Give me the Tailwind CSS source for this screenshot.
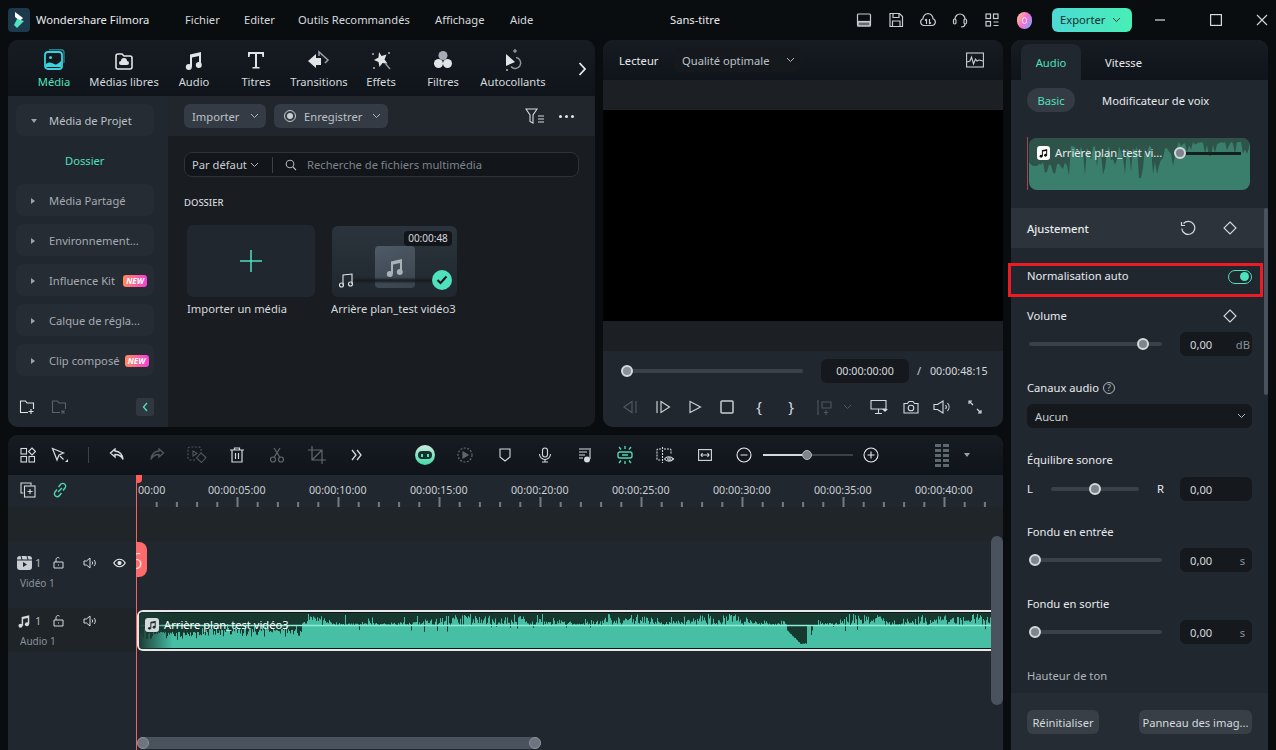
<!DOCTYPE html>
<html lang="fr"><head><meta charset="utf-8"><script src="https://cdn.jsdelivr.net/npm/@tailwindcss/browser@4"></script><title>Filmora</title></head>
<body class="m-0 bg-[#0a0d10]">
<div class="w-[1276px] h-[750px] overflow-hidden bg-[#0a0d10] flex flex-col font-['Noto_Sans','Open_Sans',sans-serif] text-[11.2px] text-[#d5dade] leading-[16px]">

<!-- top bar -->
<header class="h-[40px] shrink-0 flex items-center">
  <div class="ml-[8px] w-[22px] h-[24px] rounded-[4px] bg-[#1c3a4b] flex items-center justify-center">
    <svg width="14" height="18" viewBox="0 0 14 18"><path d="M3 1l8 6-3 3L3 6z" fill="#fff"/><path d="M5 8l7 2-7 7-3-3z" fill="#4fe3c1"/></svg>
  </div>
  <span class="ml-[6px] w-[149px] text-[#e8ebee] whitespace-nowrap">Wondershare Filmora</span>
  <span class="w-[59px] -mt-[1px]">Fichier</span><span class="w-[54px] -mt-[1px]">Editer</span><span class="w-[137px] -mt-[1px] whitespace-nowrap">Outils Recommandés</span><span class="w-[75px] -mt-[1px]">Affichage</span><span class="w-[160px] -mt-[1px]">Aide</span>
  <span class="w-[178px] text-[#e8ebee]">Sans-titre</span>
  <div class="w-[32px] flex justify-center"><svg width="16" height="16" fill="none" stroke="#c6ccd2" stroke-width="1.2"><rect x="1.500" y="2" width="13" height="12" rx="1"/><path d="M1.500 9.500h13"/><path d="M2 10h12v4H2z" fill="#c6ccd2" fill-opacity=".5"/></svg></div>
  <div class="w-[32px] flex justify-center"><svg width="16" height="16" fill="none" stroke="#c6ccd2" stroke-width="1.2"><path d="M2 1.500h9.500l3 3V14.500H2z"/><path d="M5 1.500v4h6v-4M4.500 14.500V9h7.500v5.500"/></svg></div>
  <div class="w-[32px] flex justify-center"><svg width="18" height="18" fill="none" stroke="#c6ccd2" stroke-width="1.2"><path d="M5 14.500a3.500 3.500 0 0 1-1-6.800 5 5 0 0 1 10 0 3.500 3.500 0 0 1-1 6.800z"/><path d="M7.500 13V8M6 9.500l1.500-1.500M10.500 8v5M12 11.500L10.500 13"/></svg></div>
  <div class="w-[32px] flex justify-center"><svg width="18" height="18" fill="none" stroke="#c6ccd2" stroke-width="1.2"><path d="M4 8a5 5 0 0 1 10 0"/><rect x="2.500" y="8" width="2.500" height="5" rx="1.200"/><rect x="13" y="8" width="2.500" height="5" rx="1.200"/><path d="M14 13c0 2.500-2 3-4 3"/></svg></div>
  <div class="w-[32px] flex justify-center"><svg width="16" height="16" fill="none" stroke="#c6ccd2" stroke-width="1.200"><rect x="2" y="2" width="4.500" height="4.500"/><rect x="9.500" y="2" width="4.500" height="4.500"/><rect x="2" y="9.500" width="4.500" height="4.500"/><path d="M9.500 10h5M9.500 13.500h5"/></svg></div>
  <div class="w-[32px] flex justify-center"><div class="w-[15px] h-[17px] rounded-full bg-[linear-gradient(120deg,#ffd27a,#f56fd2_50%,#6fa8ff)] flex items-center justify-center"><div class="w-[5px] h-[7px] rounded-full border border-white/70"></div></div></div>
  <div class="ml-[12px] w-[80px] h-[24px] rounded-[6px] bg-[linear-gradient(90deg,#4dd9d5,#47efb7)] flex items-center pl-[8px] text-[#14312c]">Exporter<svg class="ml-[7px]" width="9" height="6" fill="none" stroke="#14312c" stroke-width="1"><path d="M1 1l3.500 3.500L8 1"/></svg></div>
  <div class="ml-[14px] w-[28px] flex justify-center"><svg width="12" height="12" stroke="#d5dade" stroke-width="1.200"><path d="M1 6h10"/></svg></div>
  <div class="ml-[28px] w-[28px] flex justify-center"><svg width="12" height="12" fill="none" stroke="#d5dade" stroke-width="1.200"><rect x=".6" y=".6" width="10.800" height="10.800"/></svg></div>
  <div class="ml-[18px] w-[28px] flex justify-center"><svg width="12" height="12" stroke="#d5dade" stroke-width="1.100"><path d="M1 1l10 10M11 1L1 11"/></svg></div>
</header>

<main class="flex-1 min-h-0 flex gap-[8px] px-[8px]">
  <div class="w-[995px] flex flex-col gap-[8px]">
    <div class="h-[387px] flex gap-[8px]">

      <!-- media panel -->
      <section class="w-[587px] rounded-[10px] overflow-hidden flex flex-col bg-[#191c20]">
        <div class="h-[56px] shrink-0 bg-[linear-gradient(180deg,#171c22,#0f141a)] flex pl-[16px] pt-[8px]">
          <div class="w-[60px] flex flex-col items-center text-[#4fe0bd]">
            <svg width="22" height="24" viewBox="0 0 22 24" fill="none"><rect x="2" y="4" width="17" height="17" rx="3" stroke="#38d3df" stroke-width="1.800"/><path d="M6 1.800h12a3 3 0 0 1 3 3v10" stroke="#2e7f8a" stroke-width="1.400"/><circle cx="7.500" cy="9.500" r="1.500" fill="#38d3df"/><path d="M3 16c4-3 6-1 8 0s4 0 7-3v6H3z" fill="#38d3df"/></svg>
            <span class="mt-[2px]">Média</span></div>
          <div class="w-[80px] flex flex-col items-center">
            <svg width="22" height="24" viewBox="0 0 22 24" fill="none"><path d="M3 8a2 2 0 0 1 2-2h4l2 2h6a2 2 0 0 1 2 2v9a2 2 0 0 1-2 2H5a2 2 0 0 1-2-2z" stroke="#e1e5e8" stroke-width="1.600"/><path d="M8 17a2 2 0 0 1 0-4 3 3 0 0 1 6 0 2 2 0 0 1 0 4z" fill="#e1e5e8"/></svg>
            <span class="mt-[2px] whitespace-nowrap">Médias libres</span></div>
          <div class="w-[60px] flex flex-col items-center">
            <svg width="22" height="24" viewBox="0 0 22 24" fill="#e1e5e8"><path d="M7 6.500l11-2.500v13h-2V8L9 9.500V19H7z"/><circle cx="5.800" cy="19" r="3"/><circle cx="15.800" cy="17" r="3"/></svg>
            <span class="mt-[2px]">Audio</span></div>
          <div class="w-[64px] flex flex-col items-center">
            <svg width="22" height="24" viewBox="0 0 22 24" fill="#e1e5e8"><path d="M3 4h16v5h-1.600l-.4-3h-5v13h2.500v1.500h-7V19H10V6H5l-.4 3H3z"/></svg>
            <span class="mt-[2px]">Titres</span></div>
          <div class="w-[62px] flex flex-col items-center">
            <svg width="24" height="24" viewBox="0 0 24 24"><path d="M12 8V4l9 8-3 3" fill="none" stroke="#9aa2aa" stroke-width="1.500"/><path d="M1 13l8-7v4h5v7H9v3z" fill="#e1e5e8"/></svg>
            <span class="mt-[2px]">Transitions</span></div>
          <div class="w-[62px] flex flex-col items-center">
            <svg width="24" height="24" viewBox="0 0 24 24"><path d="M10 4l2.500 4 5-1.500-2 5 3 4-5-.5-3 4-1-5-4.500-2 4.500-2.500z" fill="#e1e5e8"/><path d="M16 15l5 6" stroke="#8d959c" stroke-width="1.500"/><circle cx="4" cy="6" r="1" fill="#aeb5bb"/><circle cx="20" cy="5" r="1" fill="#aeb5bb"/><circle cx="5" cy="20" r="1" fill="#aeb5bb"/></svg>
            <span class="mt-[2px]">Effets</span></div>
          <div class="w-[62px] flex flex-col items-center">
            <svg width="24" height="24" viewBox="0 0 24 24" fill="#e1e5e8"><circle cx="12" cy="7.500" r="4.500" fill="#a5acb3"/><circle cx="7.500" cy="15.500" r="4.500"/><circle cx="16.500" cy="15.500" r="4.500"/></svg>
            <span class="mt-[2px]">Filtres</span></div>
          <div class="w-[78px] flex flex-col items-center">
            <svg width="26" height="24" viewBox="0 0 26 24"><path d="M6 6l9 8-9 4z" fill="#e1e5e8"/><path d="M16 9.500a5.500 5.500 0 1 1-5 9" fill="none" stroke="#8d959c" stroke-width="1.500"/><path d="M15 1v4M13 3h4" stroke="#aeb5bb"/><circle cx="7" cy="22" r="1" fill="#aeb5bb"/></svg>
            <span class="mt-[2px] whitespace-nowrap">Autocollants</span></div>
          <svg class="ml-[26px] mt-[14px]" width="9" height="14" fill="none" stroke="#e8ebee" stroke-width="1.800"><path d="M1.500 1l5.500 6-5.500 6"/></svg>
        </div>
        <div class="flex-1 min-h-0 flex">
          <aside class="w-[160px] bg-[#20272e] pl-[8px] pr-[14px] pt-[8px] flex flex-col text-[#a4abb2]">
            <div class="h-[32px] rounded-[8px] bg-[#262c33] flex items-center pl-[15px] pt-[1px]"><span class="w-0 h-0 border-x-[3px] border-x-transparent border-t-[4px] border-t-[#9aa1a8]"></span><span class="ml-[12px] text-[#bcc2c8]">Média de Projet</span></div>
            <div class="h-[48px] flex items-center pl-[49px] pt-[1px] text-[#4fe0bd]">Dossier</div>
            <div class="flex flex-col gap-[8px]">
              <div class="h-[32px] rounded-[8px] bg-[#262c33] flex items-center pl-[15px] pt-[1px] whitespace-nowrap"><span class="w-0 h-0 border-y-[3px] border-y-transparent border-l-[4px] border-l-[#9aa1a8]"></span><span class="ml-[14px]">Média Partagé</span></div>
              <div class="h-[32px] rounded-[8px] bg-[#262c33] flex items-center pl-[15px] pt-[1px] whitespace-nowrap"><span class="w-0 h-0 border-y-[3px] border-y-transparent border-l-[4px] border-l-[#9aa1a8]"></span><span class="ml-[14px]">Environnement...</span></div>
              <div class="h-[32px] rounded-[8px] bg-[#262c33] flex items-center pl-[15px] pt-[1px] whitespace-nowrap"><span class="w-0 h-0 border-y-[3px] border-y-transparent border-l-[4px] border-l-[#9aa1a8]"></span><span class="ml-[14px]">Influence Kit</span><span class="ml-[8px] w-[24px] h-[12px] rounded-[3px] bg-[linear-gradient(90deg,#ff8a5c,#f53fd8)] text-white text-[8px] leading-[12px] font-bold italic text-center">NEW</span></div>
              <div class="h-[32px] rounded-[8px] bg-[#262c33] flex items-center pl-[15px] pt-[1px] whitespace-nowrap"><span class="w-0 h-0 border-y-[3px] border-y-transparent border-l-[4px] border-l-[#9aa1a8]"></span><span class="ml-[14px]">Calque de régla...</span></div>
              <div class="h-[32px] rounded-[8px] bg-[#262c33] flex items-center pl-[15px] pt-[1px] whitespace-nowrap"><span class="w-0 h-0 border-y-[3px] border-y-transparent border-l-[4px] border-l-[#9aa1a8]"></span><span class="ml-[14px]">Clip composé</span><span class="ml-[5px] w-[24px] h-[12px] rounded-[3px] bg-[linear-gradient(90deg,#ff8a5c,#f53fd8)] text-white text-[8px] leading-[12px] font-bold italic text-center">NEW</span></div>
            </div>
            <div class="mt-[22px] flex items-center">
              <svg class="ml-[3px]" width="16" height="16" fill="none" stroke="#e1e5e8" stroke-width="1.100"><path d="M9 13.500H1.500V2h5l1.500 2h6.500v6M12 10v5M9.500 12.500h5"/></svg>
              <svg class="ml-[16px]" width="16" height="16" fill="none" stroke="#5a626a" stroke-width="1.100"><path d="M9 13.500H1.500V2h5l1.500 2h6.500v6M10.500 11.500l3 3M13.500 11.500l-3 3"/></svg>
              <div class="ml-[70px] w-[18px] h-[18px] shrink-0 rounded-[3px] bg-[#2f3840] flex items-center justify-center"><svg width="6" height="10" fill="none" stroke="#4fe0bd" stroke-width="1.300"><path d="M5 1L1.500 5 5 9"/></svg></div>
            </div>
          </aside>
          <div class="flex-1 min-w-0 flex flex-col">
            <div class="h-[40px] shrink-0 bg-[#20262c] flex items-center pl-[16px]">
              <div class="w-[82px] h-[24px] rounded-[6px] bg-[#343b44] flex items-center justify-between pl-[8px] pr-[7px] text-[#bcc2c8]"><span class="pt-[1px]">Importer</span><svg width="9" height="6" fill="none" stroke="#aeb5bb"><path d="M1 1l3.500 3.500L8 1"/></svg></div>
              <div class="ml-[8px] w-[114px] h-[24px] rounded-[6px] bg-[#343b44] flex items-center pl-[10px] pr-[7px] text-[#bcc2c8]"><span class="w-[12px] h-[12px] rounded-full border border-[#c8ced3] flex items-center justify-center"><span class="w-[6px] h-[6px] rounded-full bg-[#c8ced3]"></span></span><span class="ml-[8px] flex-1 pt-[1px]">Enregistrer</span><svg width="9" height="6" fill="none" stroke="#aeb5bb"><path d="M1 1l3.500 3.500L8 1"/></svg></div>
              <svg class="ml-[137px]" width="20" height="18" fill="none" stroke="#d5dade" stroke-width="1.100"><path d="M1 2h11L8 8v8l-3-1.500V8zM13 9h6M13 12h6M13 15h6"/></svg>
              <div class="ml-[14px] flex gap-[3px]"><span class="w-[3px] h-[3px] rounded-full bg-[#e1e5e8]"></span><span class="w-[3px] h-[3px] rounded-full bg-[#e1e5e8]"></span><span class="w-[3px] h-[3px] rounded-full bg-[#e1e5e8]"></span></div>
            </div>
            <div class="ml-[16px] mt-[16px] w-[395px] h-[25px] rounded-[8px] bg-[#12151a] border border-[#2c333a] flex items-center pl-[7px] pt-[1px]">
              <span class="w-[58px] text-[#c8ced3] whitespace-nowrap">Par défaut</span><svg width="9" height="6" fill="none" stroke="#aeb5bb"><path d="M1 1l3.500 3.500L8 1"/></svg>
              <span class="ml-[13px] w-px h-[16px] bg-[#3a4149]"></span>
              <svg class="ml-[12px]" width="12" height="12" fill="none" stroke="#aeb5bb" stroke-width="1.100"><circle cx="5" cy="5" r="3.800"/><path d="M8 8l3 3"/></svg>
              <span class="ml-[10px] text-[#7c848c]">Recherche de fichiers multimédia</span>
            </div>
            <div class="ml-[16px] mt-[18px] text-[9.5px] font-medium text-[#d5dade]">DOSSIER</div>
            <div class="mt-[14px] flex">
              <div class="ml-[19px] w-[128px]">
                <div class="h-[72px] rounded-[6px] bg-[#20272e] flex items-center justify-center"><svg width="24" height="24" stroke="#4fe0bd" stroke-width="1.500"><path d="M12 1v22M1 12h22"/></svg></div>
                <div class="mt-[4px] whitespace-nowrap">Importer un média</div>
              </div>
              <div class="ml-[17px] w-[125px]">
                <div class="relative mt-px h-[71px] rounded-[6px] bg-[linear-gradient(180deg,#2b343c,#20272e)] overflow-hidden flex justify-center pt-[20px]">
                  <div class="w-[40px] h-[42px] rounded-[4px] bg-[linear-gradient(160deg,#4e5a66,#39434d)] flex items-center justify-center"><svg width="24" height="24" viewBox="0 0 22 24" fill="#a9b1b9"><path d="M7 6.500l11-2.500v13h-2V8L9 9.500V19H7z"/><circle cx="5.800" cy="19" r="3"/><circle cx="15.800" cy="17" r="3"/></svg></div>
                  <div class="absolute left-[22px] right-[18px] top-[53px] h-[3px] bg-[#15191d] blur-[1px]"></div>
                  <div class="absolute right-[5px] top-[5px] w-[48px] h-[15px] rounded-[4px] bg-[#12151a] text-center text-[10px] leading-[15px] text-[#d5dade]">00:00:48</div>
                  <svg class="absolute left-[6px] top-[46px]" width="16" height="16" fill="none" stroke="#e1e5e8" stroke-width="1.100"><path d="M5 13V3l9-1v10"/><circle cx="3.500" cy="13" r="2"/><circle cx="12.500" cy="12" r="2"/></svg>
                  <div class="absolute right-[5px] top-[44px] w-[20px] h-[20px] rounded-full bg-[#4fe0bd] flex items-center justify-center"><svg width="12" height="10" fill="none" stroke="#0f1418" stroke-width="2"><path d="M1.500 5l3 3 6-6.500"/></svg></div>
                </div>
                <div class="mt-[4px] -ml-px whitespace-nowrap">Arrière plan_test vidéo3</div>
              </div>
            </div>
          </div>
        </div>
      </section>

      <!-- player -->
      <section class="w-[400px] rounded-[10px] overflow-hidden flex flex-col bg-[#1c1f23]">
        <div class="h-[40px] shrink-0 bg-[linear-gradient(180deg,#171c22,#0f141a)] flex items-center pl-[16px]">
          <span class="w-[55px] text-[#e8ebee] pt-[1px]">Lecteur</span>
          <div class="w-[127px] h-[24px] rounded-[6px] bg-[#15191e] flex items-center justify-between pl-[8px] pr-[6px] text-[#bcc2c8]"><span class="whitespace-nowrap pt-[1px]">Qualité optimale</span><svg width="9" height="6" fill="none" stroke="#aeb5bb"><path d="M1 1l3.500 3.500L8 1"/></svg></div>
          <svg class="ml-[165px]" width="18" height="16" fill="none" stroke="#c8ced3" stroke-width="1.100"><rect x=".6" y="1" width="16.800" height="14"/><path d="M1 10l3-1 1.500-4 2 7 2-5 1.500 2 2-1 4 1"/></svg>
        </div>
        <div class="h-[30px] shrink-0"></div>
        <div class="h-[211px] shrink-0 bg-black"></div>
        <div class="h-[30px] shrink-0"></div>
        <div class="flex-1 bg-[#21272e] pt-[8px]">
          <div class="h-[24px] flex items-center pl-[18px]">
            <div class="relative w-[182px] h-[4px] rounded bg-[#3a4149]"><span class="absolute -left-[0px] -top-[4px] w-[12px] h-[12px] rounded-full bg-[#8a919a] border-2 border-[#d5d8dc]"></span></div>
            <div class="ml-[18px] w-[88px] h-[24px] rounded-[6px] bg-[#15191e] text-center text-[10.7px] leading-[25px] text-[#d5dade]">00:00:00:00</div>
            <span class="ml-[8px] w-[13px] text-[#c8ced3]">/</span>
            <span class="text-[10.7px] text-[#d5dade]">00:00:48:15</span>
          </div>
          <div class="mt-[12px] h-[24px] flex items-center pl-[11px]">
            <div class="w-[32px] flex justify-center"><svg width="16" height="14" fill="none" stroke="#4f575e" stroke-width="1.200"><path d="M10 1.500L2 7l8 5.500zM14 1v12"/></svg></div>
            <div class="ml-px w-[32px] flex justify-center"><svg width="16" height="14" fill="none" stroke="#c8ced3" stroke-width="1.200"><path d="M2 1v12M6 1.500L14.500 7 6 12.500z"/></svg></div>
            <div class="w-[32px] flex justify-center"><svg width="14" height="14" fill="none" stroke="#c8ced3" stroke-width="1.200"><path d="M2 1.500L12.500 7 2 12.500z"/></svg></div>
            <div class="w-[32px] flex justify-center"><svg width="14" height="14" fill="none" stroke="#c8ced3" stroke-width="1.500"><rect x="1" y="1" width="12" height="12" rx="1"/></svg></div>
            <div class="w-[32px] text-center text-[15px] -mt-[3px] text-[#d5dade]">{</div>
            <div class="w-[32px] text-center text-[15px] -mt-[3px] text-[#d5dade]">}</div>
            <div class="ml-[2px] w-[32px] flex justify-center"><svg width="16" height="15" fill="none" stroke="#4f575e" stroke-width="1.100"><path d="M1 1v13M0 1h2M0 14h2M5 2h9v6H5zM9 10v5M7 12.500h4"/></svg></div>
            <div class="w-[12px] flex justify-center"><svg width="9" height="6" fill="none" stroke="#4f575e"><path d="M1 1l3.500 3.500L8 1"/></svg></div>
            <div class="ml-[10px] w-[32px] flex justify-center"><svg width="18" height="16" fill="none" stroke="#d5dade" stroke-width="1.100"><path d="M1 1.500h15V10H1zM8.500 10v4M5 14.500h7"/><path d="M12 10h6l-3 3z" fill="#d5dade" stroke="none"/></svg></div>
            <div class="w-[32px] flex justify-center"><svg width="16" height="14" fill="none" stroke="#d5dade" stroke-width="1.100"><path d="M1 3.500h3.500L6 1.500h4l1.500 2H15v9.500H1z"/><circle cx="8" cy="8" r="2.800"/></svg></div>
            <div class="-ml-px w-[32px] flex justify-center"><svg width="18" height="14" fill="none" stroke="#d5dade" stroke-width="1.100"><path d="M1 4.500h3.500L10 1v12L4.500 9.500H1zM12.500 5a3 3 0 0 1 0 4M14.500 3a6 6 0 0 1 0 8"/></svg></div>
            <div class="ml-px w-[32px] flex justify-center"><svg width="14" height="14" fill="none" stroke="#d5dade" stroke-width="1.100"><path d="M1 1l4 4M1 4V1h3M13 13L9 9M13 10v3h-3"/></svg></div>
          </div>
        </div>
      </section>
    </div>

    <!-- timeline -->
    <section class="h-[315px] rounded-t-[10px] overflow-hidden flex flex-col bg-[#21272e] relative">
      <div class="h-[40px] shrink-0 bg-[linear-gradient(180deg,#171c22,#0f141a)] flex items-center pl-[4px]">
        <div class="w-[32px] flex justify-center"><svg width="16" height="16" fill="none" stroke="#d5dade" stroke-width="1.100"><rect x="1" y="1.500" width="5.500" height="5.500"/><path d="M12 1l3.500 3.500L12 8 8.500 4.500z"/><rect x="1" y="9.500" width="5.500" height="5.500"/><rect x="9" y="9.500" width="5.500" height="5.500"/></svg></div>
        <div class="w-[32px] flex justify-center"><svg width="18" height="16" fill="none" stroke="#d5dade" stroke-width="1.200"><path d="M1.500 1.500l11 4.500-4.500 2-2 5z"/><path d="M9 9l3.500 3.500"/><path d="M17 12v3h-3z" fill="#d5dade" stroke="none"/></svg></div>
        <div class="w-[24px] flex justify-center"><span class="w-px h-[16px] bg-[#3a4149]"></span></div>
        <div class="-ml-[3px] w-[40px] flex justify-center"><svg width="16" height="14" fill="none" stroke="#d5dade" stroke-width="1.400"><path d="M6 1L1.500 5 6 9V6.500c4 0 6.500 1.500 8 5-.5-5-3-8-8-8.500z"/></svg></div>
        <div class="w-[40px] flex justify-center"><svg width="16" height="14" fill="none" stroke="#4f575e" stroke-width="1.400"><path d="M10 1l4.500 4L10 9V6.500c-4 0-6.500 1.500-8 5 .5-5 3-8 8-8.500z"/></svg></div>
        <div class="w-[40px] flex justify-center"><svg width="20" height="18" fill="none" stroke="#4f575e" stroke-width="1.100"><path d="M8 14H3a2 2 0 0 1-2-2V3a2 2 0 0 1 2-2h9a2 2 0 0 1 2 2v4" stroke-dasharray="2 1.500"/><path d="M6 5l4 2.500L6 10z"/><path d="M14 7l5 4.500-4.500 5-5-4.500z"/></svg></div>
        <div class="w-[40px] flex justify-center"><svg width="14" height="16" fill="none" stroke="#d5dade" stroke-width="1.200"><path d="M0 3h14M4.500 3V1h5v2M2 3v12h10V3M5.500 6v6M8.500 6v6"/></svg></div>
        <div class="w-[40px] flex justify-center"><svg width="16" height="16" fill="none" stroke="#5f676f" stroke-width="1.200"><circle cx="4" cy="12.500" r="2.500"/><circle cx="12" cy="12.500" r="2.500"/><path d="M5 10.500L11 1M11 10.500L5 1"/></svg></div>
        <div class="w-[40px] flex justify-center"><svg width="18" height="18" fill="none" stroke="#5f676f" stroke-width="1.200"><path d="M4 0v14h14M0 4h14v14M4 14L14 4"/></svg></div>
        <div class="w-[40px] flex justify-center"><svg width="12" height="12" fill="none" stroke="#d5dade" stroke-width="1.300"><path d="M1 1l4 5-4 5M6 1l4 5-4 5"/></svg></div>
        <div class="ml-[28px] w-[40px] flex justify-center"><div class="w-[20px] h-[20px] rounded-full bg-[linear-gradient(180deg,#cfe9e1,#3fdba8)] flex items-center justify-center"><div class="w-[14px] h-[8px] rounded-[4px] bg-[#16322c] flex items-center justify-center gap-[4px]"><span class="w-[2px] h-[3px] bg-[#4fe0bd]"></span><span class="w-[2px] h-[3px] bg-[#4fe0bd]"></span></div></div></div>
        <div class="w-[40px] flex justify-center"><svg width="16" height="16" fill="none" stroke="#5f676f" stroke-width="1.200"><circle cx="8" cy="8" r="7" stroke-dasharray="2 1.500"/><path d="M6 5l5 3-5 3z" fill="#5f676f"/></svg></div>
        <div class="w-[40px] flex justify-center"><svg width="12" height="14" fill="none" stroke="#d5dade" stroke-width="1.100"><path d="M1 1h10v8l-5 4-5-4z"/></svg></div>
        <div class="w-[40px] flex justify-center"><svg width="14" height="16" fill="none" stroke="#d5dade" stroke-width="1.100"><rect x="4.500" y="1" width="5" height="9" rx="2.500"/><path d="M1.500 7a5.500 5.500 0 0 0 11 0M7 12.500V15M4 15h6"/></svg></div>
        <div class="w-[40px] flex justify-center"><svg width="14" height="16" fill="none" stroke="#d5dade" stroke-width="1.100"><path d="M1 2h10M1 5h8M1 8h6M1 11h4M12 1v11"/><circle cx="9" cy="12.500" r="3" fill="#d5dade" stroke="none"/></svg></div>
        <div class="w-[40px] flex justify-center"><svg width="18" height="18" fill="none" stroke="#4fd5b0" stroke-width="1.400"><rect x="2" y="6" width="14" height="6" rx="2"/><path d="M6 9h6M9 0v3M9 15v3M3 1l2 2.500M15 1l-2 2.500M3 17l2-2.500M15 17l-2-2.500"/></svg></div>
        <div class="w-[40px] flex justify-center"><svg width="19" height="17" fill="none" stroke="#d5dade" stroke-width="1.100"><path d="M5 2H2a1 1 0 0 0-1 1v9a1 1 0 0 0 1 1h3M8 2h6a1 1 0 0 1 1 1v4M6.500 0v16" stroke-dasharray="2 1"/><path d="M8.500 12c2.500-3 6-3 9 0-3 3-6.500 3-9 0z"/><circle cx="13" cy="12" r="1.300"/></svg></div>
        <div class="w-[40px] flex justify-center"><svg width="14" height="12" fill="none" stroke="#d5dade" stroke-width="1.100"><rect x=".6" y=".6" width="12.800" height="10.800"/><path d="M3 6h8M4.500 4L3 6l1.500 2M9.500 4L11 6 9.500 8"/></svg></div>
        <div class="w-[38px] flex justify-center"><svg width="16" height="16" fill="none" stroke="#e8ebee" stroke-width="1.100"><circle cx="8" cy="8" r="7"/><path d="M4.500 8h7"/></svg></div>
        <div class="relative w-[90px] h-[2px] bg-[#3a4149]"><span class="absolute left-0 top-0 w-[44px] h-[2px] bg-[#d5d8dc]"></span><span class="absolute left-[39px] -top-[4px] w-[10px] h-[10px] rounded-full bg-[#7e858d] border border-[#aeb5bb]"></span></div>
        <div class="w-[36px] flex justify-center"><svg width="16" height="16" fill="none" stroke="#e8ebee" stroke-width="1.100"><circle cx="8" cy="8" r="7"/><path d="M4.500 8h7M8 4.500v7"/></svg></div>
        <div class="ml-[33px] w-[40px] flex justify-center"><div class="grid grid-cols-2 gap-x-[2px] gap-y-[2px]"><span class="w-[6px] h-[3px] bg-[#5f676f]"></span><span class="w-[6px] h-[3px] bg-[#5f676f]"></span><span class="w-[6px] h-[3px] bg-[#5f676f]"></span><span class="w-[6px] h-[3px] bg-[#5f676f]"></span><span class="w-[6px] h-[3px] bg-[#5f676f]"></span><span class="w-[6px] h-[3px] bg-[#5f676f]"></span><span class="w-[6px] h-[3px] bg-[#5f676f]"></span><span class="w-[6px] h-[3px] bg-[#5f676f]"></span><span class="w-[6px] h-[3px] bg-[#5f676f]"></span><span class="w-[6px] h-[3px] bg-[#5f676f]"></span></div></div>
        <span class="ml-[2px] w-0 h-0 border-x-[3px] border-x-transparent border-t-[4px] border-t-[#9aa1a8]"></span>
      </div>

      <div class="h-[32px] shrink-0 flex">
        <div class="w-[128px] shrink-0 flex items-center pl-[12px] gap-[16px] pb-[2px]">
          <svg width="16" height="16" fill="none" stroke="#d5dade" stroke-width="1.100"><path d="M3.500 11H1V1h10v2.500"/><rect x="4.500" y="4" width="10.500" height="11"/><path d="M10 7v5M7.500 9.500h5"/></svg>
          <svg width="16" height="16" fill="none" stroke="#4fd5b0" stroke-width="1.400"><path d="M6.500 5l2-2.500a2.800 2.800 0 0 1 4.500 3.500l-2 2.500M9.500 11l-2 2.500a2.800 2.800 0 0 1-4.500-3.500l2-2.500M6 10l4-4"/></svg>
        </div>
        <div class="relative flex-1 min-w-0 overflow-hidden">
          <div class="flex gap-[44px] pt-[7px] text-[#c8ced3] whitespace-nowrap text-[10.7px]">
            <span class="w-[26px] ml-[2px]">00:00</span><span class="w-[57px] text-center">00:00:05:00</span><span class="w-[57px] text-center">00:00:10:00</span><span class="w-[57px] text-center">00:00:15:00</span><span class="w-[57px] text-center">00:00:20:00</span><span class="w-[57px] text-center">00:00:25:00</span><span class="w-[57px] text-center">00:00:30:00</span><span class="w-[57px] text-center">00:00:35:00</span><span class="w-[57px] text-center">00:00:40:00</span>
          </div>
          <svg class="absolute left-0 top-0" width="867" height="32"><defs><pattern id="t" x="-0.500" y="0" width="101" height="32" patternUnits="userSpaceOnUse"><path d="M1 22v10M21.200 27v5M41.400 27v5M61.600 27v5M81.800 27v5" stroke="#c8ced3" stroke-width="1"/></pattern></defs><rect x="10" width="867" height="32" fill="url(#t)"/></svg>
        </div>
      </div>

      <div class="flex-1 min-h-0 relative">
        <div class="h-[34px] bg-[#1f2529]"></div>
        <div class="h-[67px] flex">
          <div class="w-[128px] pl-[9px] pt-[12px]">
            <div class="flex items-center h-[20px]">
              <svg width="15" height="14" viewBox="0 0 15 14"><rect width="15" height="14" rx="3" fill="#c8ced3"/><path d="M6 6l4 2.500L6 11z" fill="#21272e"/><path d="M0 4h15M4 0l1 4M10 0l1 4" stroke="#21272e"/></svg>
              <span class="ml-[3px] text-[11px] text-[#aeb5bb]">1</span>
              <svg class="ml-[12px]" width="11" height="12" fill="none" stroke="#d5dade"><path d="M1 5h9v6H1zM3 5V2.500a2 2 0 0 1 3.500-1.300"/><path d="M5 8h1"/></svg>
              <svg class="ml-[19px]" width="13" height="12" fill="none" stroke="#d5dade"><path d="M1 4h2.500L7 1v10L3.500 8H1zM9 4.500a2 2 0 0 1 0 3M11 3a4 4 0 0 1 0 6"/></svg>
              <svg class="ml-[17px]" width="13" height="10" fill="none" stroke="#e8ebee" stroke-width="1.200"><path d="M.8 5c3-5 8.400-5 11.400 0-3 5-8.400 5-11.400 0z"/><circle cx="6.500" cy="5" r="1.500" fill="#e8ebee"/></svg>
            </div>
            <div class="mt-[2px] pl-[3px] text-[10px] text-[#8a929a]">Vidéo 1</div>
          </div>
        </div>
        <div class="flex">
          <div class="w-[128px] h-[44px] bg-[#1f2428] pl-[9px] pt-[3px]">
            <div class="flex items-center h-[20px]">
              <svg width="14" height="14" viewBox="0 0 22 24" fill="#d5dade"><path d="M7 5l13-3v15h-2.500V7L9.500 8.500V20H7z"/><circle cx="5" cy="20" r="3.500"/><circle cx="16" cy="17.500" r="3.500"/></svg>
              <span class="ml-[4px] text-[11px] text-[#aeb5bb]">1</span>
              <svg class="ml-[12px]" width="11" height="12" fill="none" stroke="#d5dade"><path d="M1 5h9v6H1zM3 5V2.500a2 2 0 0 1 3.500-1.300"/><path d="M5 8h1"/></svg>
              <svg class="ml-[19px]" width="13" height="12" fill="none" stroke="#d5dade"><path d="M1 4h2.500L7 1v10L3.500 8H1zM9 4.500a2 2 0 0 1 0 3M11 3a4 4 0 0 1 0 6"/></svg>
            </div>
            <div class="mt-[2px] pl-[3px] text-[10px] text-[#8a929a]">Audio 1</div>
          </div>
          <div class="relative ml-[1px] mt-[2px] w-[854px] h-[41px] rounded-l-[6px] border-y-[2px] border-l-[2px] border-white/90 bg-[#0f1a18] overflow-hidden">
            <svg id="wave" class="absolute left-0 top-[1px]" width="852" height="35"><rect width="852" height="35" fill="#16382f"/><path id="wavep" fill="#47bfa5"/><path d="M0 12.500h852" stroke="#8aeed6" stroke-width="1.500"/></svg>
            <div class="absolute left-0 top-0 bottom-0 w-[34px] bg-[linear-gradient(90deg,#1c3a33,transparent)]"></div>
            <div class="absolute left-[6px] top-[6px] w-[14px] h-[14px] rounded-[3px] bg-[#d5dade] flex items-center justify-center"><svg width="10" height="10" viewBox="0 0 22 24" fill="#24302e"><path d="M7 5l13-3v15h-2.500V7L9.500 8.500V20H7z"/><circle cx="5" cy="20" r="3.500"/><circle cx="16" cy="17.500" r="3.500"/></svg></div>
            <span class="absolute left-[25px] top-[5px] whitespace-nowrap text-white">Arrière plan_test vidéo3</span>
          </div>
        </div>
        <!-- scrollbars -->
        <div class="absolute right-0 top-[29px] w-[12px] h-[169px] rounded-[6px] bg-[#4a535d]"></div>
        <div class="absolute left-[129px] bottom-[1px] w-[404px] h-[12px] rounded-[6px] bg-[#4a535d] flex justify-between"><span class="w-[12px] h-[12px] rounded-full bg-[#6c7580] border border-[#8a929a]"></span><span class="w-[12px] h-[12px] rounded-full bg-[#6c7580] border border-[#8a929a]"></span></div>
      </div>
      <!-- playhead -->
      <div class="absolute left-[128px] top-[40px] bottom-0 w-px bg-[#ff5c5c]"></div>
      <div class="absolute left-[128px] top-[40px] w-[6px] h-[8px] rounded-br-[4px] bg-[#ff5c5c]"></div>
      <div class="absolute left-[128px] top-[107px] w-[11px] h-[35px] rounded-r-[8px] bg-[#ff6b6b] flex items-center text-[22px] font-light text-[#ffe3e3] overflow-hidden"><span class="-ml-[6px]">6</span></div>
    </section>
  </div>

  <!-- right panel -->
  <aside class="w-[257px] h-[710px] bg-[#21272e] flex flex-col relative rounded-t-[10px]">
    <div class="h-[40px] shrink-0 rounded-t-[10px] bg-[linear-gradient(180deg,#171c22,#0f141a)] flex items-end pl-[10px]">
      <div class="w-[60px] h-[36px] rounded-t-[8px] bg-[#21272e] text-center leading-[37px] text-[#4fe0bd]">Audio</div>
      <div class="ml-[24px] h-[36px] leading-[37px] text-[#e8ebee]">Vitesse</div>
    </div>
    <div class="mt-[8px] h-[24px] flex items-center pl-[16px]">
      <div class="w-[48px] h-[24px] rounded-[12px] bg-[#343b44] text-center leading-[25px] text-[#4fe0bd]">Basic</div>
      <span class="ml-[27px] pt-[1px] text-[#e8ebee] whitespace-nowrap">Modificateur de voix</span>
    </div>
    <div class="relative mt-[26px] ml-[18px] w-[221px] h-[52px] rounded-[8px] bg-[#3a7f6b] overflow-hidden">
      <svg class="absolute left-0 top-0" width="221" height="52"><path id="minip" fill="#25312f" fill-opacity=".55"/></svg>
      <div class="absolute left-[8px] top-[8px] w-[13px] h-[14px] rounded-[3px] bg-white flex items-center justify-center"><svg width="9" height="10" viewBox="0 0 22 24" fill="#111"><path d="M7 5l13-3v15h-2.500V7L9.500 8.500V20H7z"/><circle cx="5" cy="20" r="3.500"/><circle cx="16" cy="17.500" r="3.500"/></svg></div>
      <span class="absolute left-[26px] top-[7px] whitespace-nowrap text-[#e8ebee]">Arrière plan_test vi...</span>
      <div class="absolute left-[151px] top-[14px] w-[61px] h-[3px] bg-[#14201d]"></div>
      <span class="absolute left-[145px] top-[9px] w-[12px] h-[12px] rounded-full bg-[#7e858d] border-2 border-[#d5d8dc]"></span>
    </div>
    <div class="absolute left-[16px] top-[97px] w-px h-[53px] bg-[#9c4a4a]"></div>
    <div class="mt-[18px] h-[40px] shrink-0 bg-[#2c333a] flex items-center pl-[16px]">
      <span class="w-[153px] pt-[1px] font-medium text-[#e8ebee]">Ajustement</span>
      <svg width="16" height="16" fill="none" stroke="#d5dade" stroke-width="1.200"><path d="M3.500 3.500A6.500 6.500 0 1 1 1.800 8.500M1.500 2v3.500H5"/></svg>
      <svg class="ml-[27px]" width="14" height="14" fill="none" stroke="#d5dade" stroke-width="1.100"><path d="M7 1l6 6-6 6-6-6z"/></svg>
    </div>
    <div class="mt-[15px] -ml-[3px] w-[255px] h-[34px] shrink-0 border-[3px] border-[#ed1c24] flex items-center pl-[16px] relative z-10">
      <span class="flex-1 text-[#e8ebee] -mt-[8px]">Normalisation auto</span>
      <span class="mr-[8px] -mt-[7px] w-[24px] h-[14px] rounded-full border border-[#4fe0bd] flex items-center justify-end pr-[2px]"><span class="w-[9px] h-[9px] rounded-full bg-[#4fe0bd]"></span></span>
    </div>
    <div class="mt-[9px] h-[20px] shrink-0 flex items-center pl-[16px]"><span class="w-[196px] text-[#e8ebee]">Volume</span><svg width="14" height="14" fill="none" stroke="#d5dade" stroke-width="1.100"><path d="M7 1l6 6-6 6-6-6z"/></svg></div>
    <div class="mt-[6px] h-[24px] shrink-0 flex items-center pl-[18px]">
      <div class="relative w-[133px] h-[4px] rounded bg-[#3a4149]"><span class="absolute left-[108px] -top-[4px] w-[12px] h-[12px] rounded-full bg-[#7e858d] border-2 border-[#d5d8dc]"></span></div>
      <div class="ml-[18px] w-[72px] h-[24px] rounded-[6px] bg-[#15191e] flex items-center justify-between pt-[1px] px-[10px] pr-[2px]"><span>0,00</span><span class="text-[#8a929a]">dB</span></div>
    </div>
    <div class="mt-[22px] h-[20px] shrink-0 flex items-center pl-[16px] text-[#e8ebee]">Canaux audio<span class="ml-[4px] w-[12px] h-[12px] rounded-full border border-[#aeb5bb] text-[9px] leading-[10px] text-center text-[#aeb5bb]">?</span></div>
    <div class="mt-[6px] ml-[16px] w-[225px] h-[24px] shrink-0 rounded-[6px] bg-[#15191e] flex items-center justify-between pl-[8px] pr-[6px] text-[#c8ced3]"><span class="pt-[1px]">Aucun</span><svg width="9" height="6" fill="none" stroke="#aeb5bb"><path d="M1 1l3.500 3.500L8 1"/></svg></div>
    <div class="mt-[22px] h-[20px] shrink-0 flex items-center pl-[16px] text-[#e8ebee]">Équilibre sonore</div>
    <div class="mt-[7px] h-[24px] shrink-0 flex items-center pl-[16px]">
      <span class="w-[24px] text-[#e8ebee]">L</span>
      <div class="relative w-[88px] h-[4px] rounded bg-[#3a4149]"><span class="absolute left-[38px] -top-[4px] w-[12px] h-[12px] rounded-full bg-[#7e858d] border-2 border-[#d5d8dc]"></span></div>
      <span class="ml-[18px] w-[23px] text-[#e8ebee]">R</span>
      <div class="w-[72px] h-[24px] rounded-[6px] bg-[#15191e] flex items-center pt-[1px] px-[10px]"><span>0,00</span></div>
    </div>
    <div class="mt-[21px] h-[20px] shrink-0 flex items-center pl-[16px] text-[#e8ebee]">Fondu en entrée</div>
    <div class="mt-[6px] h-[24px] shrink-0 flex items-center pl-[18px]">
      <div class="relative w-[133px] h-[4px] rounded bg-[#3a4149]"><span class="absolute left-0 -top-[4px] w-[12px] h-[12px] rounded-full bg-[#7e858d] border-2 border-[#d5d8dc]"></span></div>
      <div class="ml-[18px] w-[72px] h-[24px] rounded-[6px] bg-[#15191e] flex items-center justify-between pt-[1px] px-[10px] pr-[7px]"><span>0,00</span><span class="text-[#8a929a]">s</span></div>
    </div>
    <div class="mt-[22px] h-[20px] shrink-0 flex items-center pl-[16px] text-[#e8ebee]">Fondu en sortie</div>
    <div class="mt-[6px] h-[24px] shrink-0 flex items-center pl-[18px]">
      <div class="relative w-[133px] h-[4px] rounded bg-[#3a4149]"><span class="absolute left-0 -top-[4px] w-[12px] h-[12px] rounded-full bg-[#7e858d] border-2 border-[#d5d8dc]"></span></div>
      <div class="ml-[18px] w-[72px] h-[24px] rounded-[6px] bg-[#15191e] flex items-center justify-between pt-[1px] px-[10px] pr-[7px]"><span>0,00</span><span class="text-[#8a929a]">s</span></div>
    </div>
    <div class="mt-[22px] h-[20px] shrink-0 flex items-center pl-[16px] text-[#aeb5bb]">Hauteur de ton</div>
    <div class="mt-auto h-[57px] shrink-0 bg-[#262c33] flex items-center pl-[16px]">
      <div class="w-[72px] h-[24px] rounded-[6px] bg-[#383f47] text-center leading-[25px] text-[#d5dade]">Réinitialiser</div>
      <div class="ml-[40px] w-[113px] h-[24px] rounded-[6px] bg-[#383f47] text-center leading-[25px] text-[#d5dade] whitespace-nowrap">Panneau des imag...</div>
    </div>
    <!-- panel scrollbar -->
    <div class="absolute right-0 top-[168px] w-[4px] h-[187px] rounded-[2px] bg-[#4a535d]"></div>
  </aside>
</main>
</div>
<script>
(function(){
  var s=12345;function r(){s=(s*16807)%2147483647;return s/2147483647;}
  // clip waveform: teal envelope over the dark band; y=12.5 is the centre line
  var d='M0 35',W=852,slow=.3;
  for(var x=0;x<W;x+=1){
    var sx=x+137,y;
    slow+=(r()-.5)*.3;if(slow<.1)slow=.1;if(slow>.8)slow=.8;
    if(sx<300){var h=r();y=(sx<200?19:16)+h*h*8-(r()<.04?5:0);if(sx>240&&r()<.2)y=12;}
    else if(sx>=785&&sx<805){y=17+Math.min(sx-785,13)+r();}
    else if(sx>=805&&sx<816){y=r()<.35?17+r()*5:12;}
    else{var b=r();y=12-slow*14*b-(r()<.08?r()*8:0);if(r()<.025)y=14+r()*5;}
    if(y<1)y=1;
    d+='L'+x+' '+y.toFixed(1)+'L'+(x+1)+' '+y.toFixed(1);
  }
  document.getElementById('wavep').setAttribute('d',d+'L'+W+' 35Z');
  // preview waveform: dark sky above the teal body
  var m='M0 0',t=2024;function q(){t=(t*16807)%2147483647;return t/2147483647;}
  for(var i=0;i<=221;i+=2){var h2=q();var v=(i<40?24+h2*12:i<150?8+h2*h2*30:4+h2*h2*14);if(i>108&&i<114)v=40;m+='L'+i+' '+v.toFixed(1);}
  document.getElementById('minip').setAttribute('d',m+'L221 0Z');
})();
</script>
</body></html>
